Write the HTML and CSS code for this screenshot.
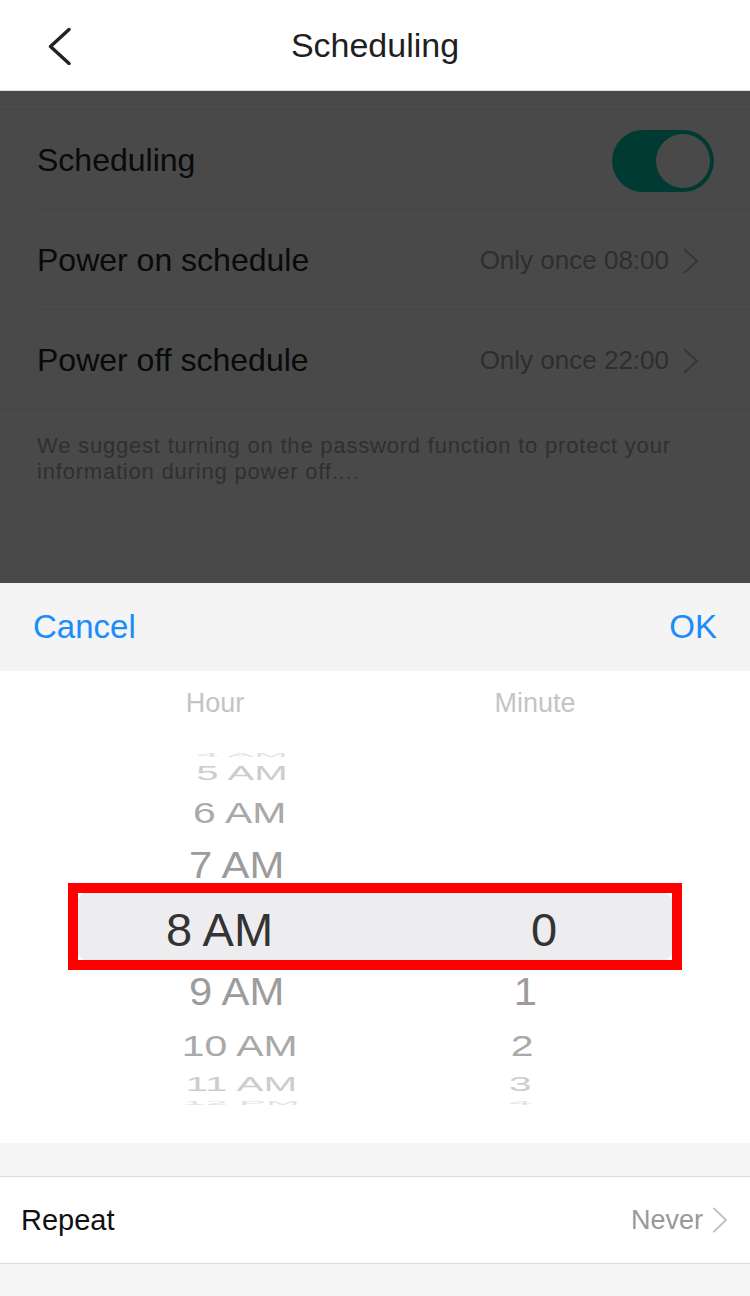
FILE: index.html
```html
<!DOCTYPE html>
<html lang="en">
<head>
    <meta charset="UTF-8">
    <title>Scheduling</title>
    <link rel="stylesheet" href="styles.css">
</head>
<body>
<header class="topbar">
    <button class="back">
        <svg width="24" height="40" viewBox="0 0 24 40"><path d="M22 4.5 L3.5 21.5 L22 38.5" fill="none" stroke="#222" stroke-width="3.4" stroke-linecap="round" stroke-linejoin="round"/></svg>
    </button>
    <h1 class="title">Scheduling</h1>
    <span></span>
</header>
<main class="page">
    <ul class="list">
        <li class="row">
            <span class="row_label">Scheduling</span>
            <span class="switch"><span class="knob"></span></span>
        </li>
        <li class="row">
            <span class="row_label">Power on schedule</span>
            <span class="row_value">Only once 08:00
                <svg width="31" height="28" viewBox="0 0 31 28"><path d="M1.5 2.5 L14 14 L1.5 25.5" fill="none" stroke="#b4b4b4" stroke-width="2" stroke-linecap="round" stroke-linejoin="round"/></svg>
            </span>
        </li>
        <li class="row">
            <span class="row_label">Power off schedule</span>
            <span class="row_value">Only once 22:00
                <svg width="31" height="28" viewBox="0 0 31 28"><path d="M1.5 2.5 L14 14 L1.5 25.5" fill="none" stroke="#b4b4b4" stroke-width="2" stroke-linecap="round" stroke-linejoin="round"/></svg>
            </span>
        </li>
    </ul>
    <p class="hint">We suggest turning on the password function to protect your<br>information during power off....</p>
    <div class="dim"></div>
</main>
<section class="sheet">
    <div class="toolbar">
        <button class="tool_btn">Cancel</button>
        <button class="tool_btn">OK</button>
    </div>
    <div class="picker">
        <div class="picker_labels">
            <span>Hour</span>
            <span>Minute</span>
        </div>
        <div class="wheel">
            <div class="band"></div>
            <div class="wheel_row d_m4"><span>4 AM</span><span></span></div>
            <div class="wheel_row d_m3"><span>5 AM</span><span></span></div>
            <div class="wheel_row d_m2"><span>6 AM</span><span></span></div>
            <div class="wheel_row d_m1"><span>7 AM</span><span></span></div>
            <div class="wheel_row d_0"><span>8 AM</span><span>0</span></div>
            <div class="wheel_row d_p1"><span>9 AM</span><span>1</span></div>
            <div class="wheel_row d_p2"><span>10 AM</span><span>2</span></div>
            <div class="wheel_row d_p3"><span>11 AM</span><span>3</span></div>
            <div class="wheel_row d_p4"><span>12 PM</span><span>4</span></div>
            <div class="mark"></div>
        </div>
    </div>
    <div class="gap"></div>
    <div class="repeat">
        <span class="repeat_label">Repeat</span>
        <span class="repeat_value">Never
            <svg width="16" height="28" viewBox="0 0 16 28"><path d="M2 2.5 L14 14 L2 25.5" fill="none" stroke="#c4c4c4" stroke-width="2" stroke-linecap="round" stroke-linejoin="round"/></svg>
        </span>
    </div>
</section>
</body>
</html>
```

FILE: styles.css
```css
*{
    padding: 0px;
    margin: 0px;
    box-sizing: border-box;
}
body{
    width: 750px;
    height: 1296px;
    overflow: hidden;
    background: #f5f5f5;
    font-family: "Liberation Sans", Arial, sans-serif;
    display: flex;
    flex-direction: column;
}
button{
    border: none;
    background: none;
    font-family: inherit;
}

/* top bar */
.topbar{
    height: 91px;
    background: white;
    border-bottom: 1px solid #dcdcdc;
    display: grid;
    grid-template-columns: 1fr auto 1fr;
    align-items: center;
}
.back{
    display: flex;
    padding-left: 47px;
}
.title{
    font-size: 34px;
    font-weight: normal;
    color: #1f1f1f;
}

/* page behind the sheet */
.page{
    position: relative;
    height: 492px;
    flex: none;
    padding-top: 18px;
    overflow: hidden;
}
.list{
    list-style: none;
    border-top: 1px solid #e3e3e3;
    border-bottom: 1px solid #e3e3e3;
}
.row{
    height: 100px;
    margin-left: 37px;
    padding-right: 36px;
    padding-top: 2px;
    border-bottom: 1px solid #e3e3e3;
    display: flex;
    align-items: center;
    justify-content: space-between;
}
.row:last-child{
    border-bottom: none;
    height: 99px;
}
.row_label{
    font-size: 32px;
    color: #222;
}
.row_value{
    font-size: 26px;
    color: #999;
    display: flex;
    align-items: center;
}
.row_value svg{
    margin-left: 14px;
}
.switch{
    width: 102px;
    height: 62px;
    border-radius: 31px;
    background: #00c4aa;
    display: flex;
    align-items: center;
    justify-content: flex-end;
    padding-right: 4px;
}
.knob{
    width: 54px;
    height: 54px;
    border-radius: 50%;
    background: #f5f5f5;
}
.hint{
    margin-top: 23px;
    padding-left: 37px;
    font-size: 22px;
    letter-spacing: 0.8px;
    line-height: 26px;
    color: #a0a0a0;
}
.dim{
    position: absolute;
    top: 0;
    left: 0;
    right: 0;
    bottom: 0;
    background: rgba(0,0,0,0.7);
}

/* bottom sheet */
.sheet{
    flex: 1;
    display: flex;
    flex-direction: column;
}
.toolbar{
    height: 88px;
    background: #f4f4f4;
    display: flex;
    align-items: center;
    justify-content: space-between;
    padding: 0 33px;
}
.tool_btn{
    font-size: 33px;
    color: #1a8cfc;
}
.picker{
    background: white;
    padding-bottom: 35px;
}
.picker_labels{
    display: grid;
    grid-template-columns: 1fr 1fr;
    padding: 18px 55px 33px;
    font-size: 27px;
    line-height: 28px;
    color: #c4c4c4;
    text-align: center;
}
.wheel{
    height: 358px;
    overflow: hidden;
    display: grid;
    align-items: center;
}
.wheel > *{
    grid-area: 1 / 1;
}
.band{
    justify-self: center;
    width: 596px;
    height: 69px;
    margin-bottom: 5px;
    border-radius: 12px;
    background: #ededef;
}
.mark{
    justify-self: center;
    width: 614px;
    height: 87px;
    margin-bottom: 5px;
    border: 10px solid #ff0000;
}
.wheel_row{
    display: grid;
    grid-template-columns: 281px 1fr;
    padding: 0 22px 0 79px;
    font-size: 47px;
    line-height: 1;
    text-align: center;
    color: #333;
}
.d_m4{ transform: translateY(-175px) scale(0.855, 0.13); color: #e2e2e2; }
.d_m3{ transform: translateY(-156px) scale(0.855, 0.42); color: #cdcdcd; }
.d_m2{ transform: translateY(-117px) scale(0.87, 0.61); color: #a9a9a9; }
.d_m1{ transform: translateY(-64px) scale(0.89, 0.77); color: #9c9c9c; }
.d_p1{ transform: translateY(62px) scale(0.89, 0.82); color: #9c9c9c; }
.d_p2{ transform: translateY(116px) scale(0.87, 0.63); color: #a9a9a9; }
.d_p3{ transform: translateY(155px) scale(0.86, 0.42); color: #cdcdcd; }
.d_p4{ transform: translateY(173px) scale(0.86, 0.13); color: #e2e2e2; }

.gap{
    height: 33px;
    flex: none;
}
.repeat{
    height: 88px;
    background: white;
    border-top: 1px solid #dcdcdc;
    border-bottom: 1px solid #dcdcdc;
    display: flex;
    align-items: center;
    justify-content: space-between;
    padding: 0 22px 0 21px;
}
.repeat_label{
    font-size: 29px;
    color: #111;
}
.repeat_value{
    font-size: 27px;
    color: #999;
    display: flex;
    align-items: center;
}
.repeat_value svg{
    margin-left: 9px;
}
```
